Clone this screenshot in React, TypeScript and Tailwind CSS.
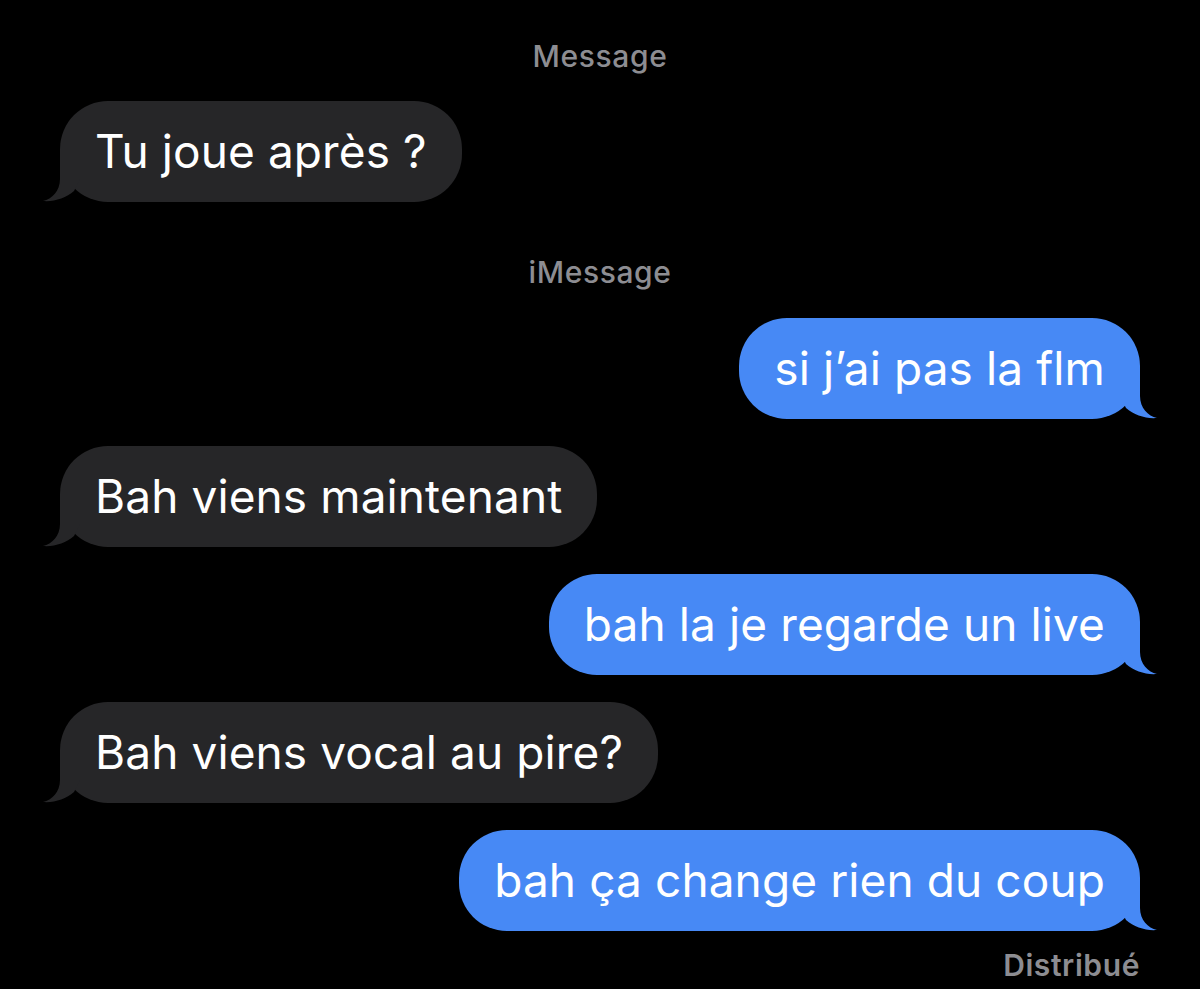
import React from "react";

type Msg = { text: string; me: boolean };

const Tail = ({ me, color }: { me: boolean; color: string }) => (
  <svg
    width="40"
    height="54"
    viewBox="0 0 40 54"
    className={
      me
        ? "absolute bottom-[-1px] right-[-20px] -scale-x-100"
        : "absolute bottom-[-1px] left-[-20px]"
    }
  >
    <path
      d="M20 0 L20 30 C20 42 12 50 3 52 C14 53 26 49 34 42 L40 30 L40 0 Z"
      fill={color}
    />
  </svg>
);

const Bubble = ({ text, me }: Msg) => {
  const color = me ? "#4789f5" : "#262628";
  return (
    <div className={me ? "flex justify-end pr-[60px]" : "flex justify-start pl-[60px]"}>
      <div
        className={
          "relative h-[101px] flex items-center px-[35px] rounded-[48px] text-white text-[46px] tracking-[0.1px] " +
          (me ? "bg-[#4789f5]" : "bg-[#262628]")
        }
      >
        <Tail me={me} color={color} />
        <span className="relative">{text}</span>
      </div>
    </div>
  );
};

const Label = ({ children }: { children: React.ReactNode }) => (
  <div className="h-8 flex items-center justify-center text-[30px] font-medium tracking-[0.6px] text-[#8d8d92]">
    {children}
  </div>
);

const App = () => {
  const messages: Msg[] = [
    { text: "si j’ai pas la flm", me: true },
    { text: "Bah viens maintenant", me: false },
    { text: "bah la je regarde un live", me: true },
    { text: "Bah viens vocal au pire?", me: false },
    { text: "bah ça change rien du coup", me: true },
  ];

  return (
    <div className="w-[1200px] h-[989px] bg-black overflow-hidden pt-10 font-['Inter','Liberation_Sans',sans-serif]">
      <Label>Message</Label>
      <div className="mt-[29px]">
        <Bubble text="Tu joue après ?" me={false} />
      </div>
      <div className="mt-[54px]">
        <Label>iMessage</Label>
      </div>
      <div className="mt-[30px] flex flex-col gap-[27px]">
        {messages.map((m) => (
          <Bubble key={m.text} {...m} />
        ))}
      </div>
      <div className="mt-[18px] h-8 flex items-center justify-end pr-[60px] text-[30px] font-semibold tracking-[0.6px] text-[#8d8d92]">
        Distribué
      </div>
    </div>
  );
};

export default App;
